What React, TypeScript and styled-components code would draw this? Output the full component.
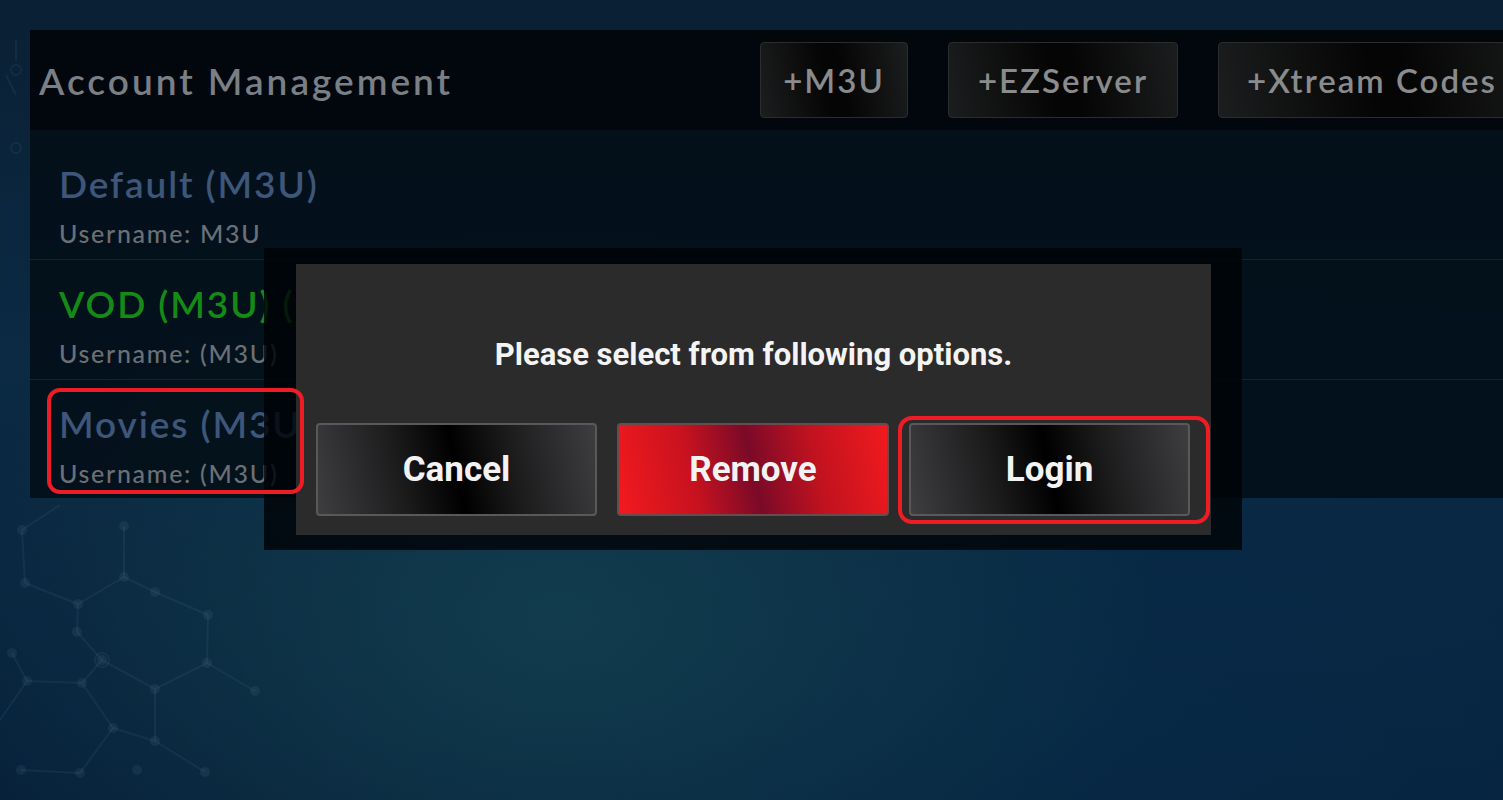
import React from "react";
import styled, { createGlobalStyle } from "styled-components";

const GlobalStyle = createGlobalStyle`
  html, body { margin: 0; padding: 0; background: #0a2236; }
  * { box-sizing: border-box; }
`;

const Screen = styled.div`
  position: relative;
  width: 1503px;
  height: 800px;
  overflow: hidden;
  padding: 30px 0 0 30px;
  background:
    radial-gradient(ellipse 620px 400px at 560px 620px, rgba(20, 66, 80, 0.8), rgba(20, 66, 80, 0) 100%),
    radial-gradient(ellipse 900px 500px at 1150px 720px, rgba(6, 44, 76, 0.6), rgba(6, 44, 76, 0) 100%),
    linear-gradient(180deg, #0a2034 0%, #0b2a44 45%, #07213a 100%);
  font-family: "Lato", "Open Sans", sans-serif;
`;

const Network = styled.svg`
  position: absolute;
  left: 0;
  top: 0;
  pointer-events: none;
`;

const Panel = styled.section`
  position: relative;
  width: 1600px;
  display: flex;
  flex-direction: column;
`;

const Header = styled.header`
  height: 100px;
  display: flex;
  align-items: center;
  padding-left: 9px;
  background: rgba(1, 5, 9, 0.93);
`;

const Title = styled.h1`
  margin: 0;
  flex: 0 0 721px;
  font-family: "Lato", sans-serif;
  font-weight: 600;
  font-size: 37px;
  letter-spacing: 3px;
  color: #7a7f86;
  white-space: nowrap;
`;

const HeaderActions = styled.div`
  display: flex;
  gap: 40px;
`;

const HeaderButton = styled.button<{ $w: number }>`
  width: ${(p) => p.$w}px;
  height: 76px;
  border: 1px solid #2a2c2e;
  border-radius: 4px;
  background: linear-gradient(80deg, #1c1d1e 0%, #050505 45%, #050505 55%, #1c1d1e 100%);
  color: #8a8b8c;
  font-family: "Lato", sans-serif;
  font-weight: 600;
  font-size: 33px;
  letter-spacing: 2px;
  padding: 0 0 0 28px;
  text-align: left;
  white-space: nowrap;
`;

const CenteredHeaderButton = styled(HeaderButton)`
  padding: 0;
  text-align: center;
`;

const List = styled.div`
  padding-top: 10px;
  background: rgba(2, 12, 20, 0.82);
`;

const Row = styled.div<{ $last?: boolean }>`
  position: relative;
  padding: 22px 0 0 29px;
  border-bottom: ${(p) => (p.$last ? "none" : "1px solid #16222c")};
  height: ${(p) => (p.$last ? "118px" : "120px")};
`;

const RowTitle = styled.div<{ $color: string }>`
  font-family: "Lato", sans-serif;
  font-weight: 600;
  font-size: 37px;
  letter-spacing: 1.9px;
  line-height: 44px;
  color: ${(p) => p.$color};
  white-space: nowrap;
`;

const RowSub = styled.div`
  margin-top: 12px;
  font-family: "Lato", sans-serif;
  font-weight: 500;
  font-size: 25px;
  letter-spacing: 1.7px;
  line-height: 30px;
  color: #6a7077;
  white-space: nowrap;
`;

const Ring = styled.div`
  position: absolute;
  border: 4px solid #ee1c25;
  border-radius: 13px;
  z-index: 20;
  pointer-events: none;
`;

const RowRing = styled(Ring)`
  left: 17px;
  top: 8px;
  width: 257px;
  height: 106px;
`;

const DialogShade = styled.div`
  position: absolute;
  left: 264px;
  top: 248px;
  width: 978px;
  height: 302px;
  padding: 16px 31px 15px 32px;
  background: rgba(0, 3, 6, 0.82);
  z-index: 10;
`;

const Dialog = styled.div`
  height: 100%;
  background: #2b2b2b;
  display: flex;
  flex-direction: column;
  align-items: stretch;
  padding: 70px 20px 19px 20px;
`;

const Message = styled.p`
  margin: 0;
  text-align: center;
  font-family: "Roboto", sans-serif;
  font-weight: 700;
  font-size: 31px;
  line-height: 42px;
  color: #f4f4f4;
`;

const ButtonRow = styled.div`
  margin-top: auto;
  display: grid;
  grid-template-columns: 281px 272px 281px;
  gap: 20px;
  height: 93px;
`;

const ButtonWrap = styled.div`
  position: relative;
  display: flex;
`;

const DialogButton = styled.button<{ $danger?: boolean }>`
  flex: 1;
  border: 2px solid ${(p) => (p.$danger ? "#6b4a4e" : "#59595b")};
  border-radius: 4px;
  background: ${(p) =>
    p.$danger
      ? "linear-gradient(78deg, #f21a1e 0%, #c8121f 28%, #7a0a28 50%, #c0121f 72%, #f21a1e 100%)"
      : "linear-gradient(78deg, #3e3e41 0%, #1c1c1d 30%, #000000 50%, #1c1c1d 70%, #3e3e41 100%)"};
  color: #f3f3f3;
  font-family: "Roboto", sans-serif;
  font-weight: 700;
  font-size: 35px;
  padding: 0;
`;

const ButtonRing = styled(Ring)`
  left: -11px;
  right: -20px;
  top: -7px;
  bottom: -8px;
  border-radius: 14px;
`;

const nodes: [number, number][] = [
  [22, 530], [124, 526], [25, 583], [124, 577], [78, 604], [155, 592], [77, 632], [208, 615],
  [102, 660], [12, 653], [27, 681], [82, 683], [207, 663], [155, 689], [255, 691], [113, 728],
  [155, 741], [21, 770], [80, 773], [137, 770], [205, 772],
];
const edges: [number, number][] = [
  [0, 2], [1, 3], [2, 4], [4, 3], [4, 6], [3, 5], [5, 7], [7, 12], [6, 8], [8, 13], [13, 12],
  [8, 11], [11, 10], [10, 9], [11, 15], [15, 16], [16, 13], [15, 18], [12, 14], [16, 20], [18, 17],
];

export default function App() {
  return (
    <>
      <GlobalStyle />
      <Screen>
        <Network width="1503" height="800" viewBox="0 0 1503 800">
          <g stroke="rgba(90,125,150,0.13)" strokeWidth="2" fill="none">
            {edges.map(([a, b], i) => (
              <line key={i} x1={nodes[a][0]} y1={nodes[a][1]} x2={nodes[b][0]} y2={nodes[b][1]} />
            ))}
            <line x1="0" y1="720" x2="27" y2="681" />
            <line x1="22" y1="530" x2="60" y2="505" />
            <circle cx="102" cy="660" r="7" />
            <circle cx="16" cy="70" r="5" />
            <circle cx="16" cy="148" r="5" />
            <line x1="16" y1="40" x2="16" y2="60" />
            <line x1="6" y1="75" x2="16" y2="95" />
          </g>
          <g fill="rgba(90,125,150,0.14)">
            {nodes.map(([x, y], i) => (
              <circle key={i} cx={x} cy={y} r="5" />
            ))}
          </g>
        </Network>
        <Panel>
          <Header>
            <Title>Account Management</Title>
            <HeaderActions>
              <CenteredHeaderButton $w={148}>+M3U</CenteredHeaderButton>
              <CenteredHeaderButton $w={230}>+EZServer</CenteredHeaderButton>
              <HeaderButton $w={340}>+Xtream Codes</HeaderButton>
            </HeaderActions>
          </Header>
          <List>
            <Row>
              <RowTitle $color="#3d5679">Default (M3U)</RowTitle>
              <RowSub>Username: M3U</RowSub>
            </Row>
            <Row>
              <RowTitle $color="#168a16">VOD (M3U) (Inactive)</RowTitle>
              <RowSub>Username: (M3U)</RowSub>
            </Row>
            <Row $last>
              <RowTitle $color="#3d5679">Movies (M3U)</RowTitle>
              <RowSub>Username: (M3U)</RowSub>
              <RowRing />
            </Row>
          </List>
        </Panel>
        <DialogShade>
          <Dialog>
            <Message>Please select from following options.</Message>
            <ButtonRow>
              <ButtonWrap>
                <DialogButton>Cancel</DialogButton>
              </ButtonWrap>
              <ButtonWrap>
                <DialogButton $danger>Remove</DialogButton>
              </ButtonWrap>
              <ButtonWrap>
                <DialogButton>Login</DialogButton>
                <ButtonRing />
              </ButtonWrap>
            </ButtonRow>
          </Dialog>
        </DialogShade>
      </Screen>
    </>
  );
}
